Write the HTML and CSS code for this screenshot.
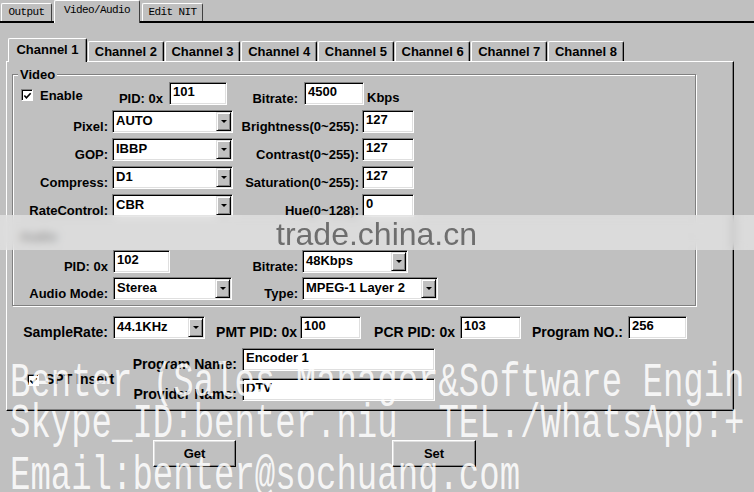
FILE: index.html
```html
<!DOCTYPE html>
<html lang="en">
<head>
    <meta charset="UTF-8">
    <title>Encoder Settings</title>
    <link rel="stylesheet" href="styles.css">
</head>
<body>
    <!-- page tabs -->
    <div class="top-tabs">
        <div class="top-tab tab-output">Output</div>
        <div class="top-tab tab-av active">Video/Audio</div>
        <div class="top-tab tab-nit">Edit NIT</div>
    </div>

    <!-- channel tabs -->
    <div class="chan-tabs">
        <div class="chan-tab active">Channel 1</div>
        <div class="chan-tab">Channel 2</div>
        <div class="chan-tab">Channel 3</div>
        <div class="chan-tab">Channel 4</div>
        <div class="chan-tab">Channel 5</div>
        <div class="chan-tab">Channel 6</div>
        <div class="chan-tab">Channel 7</div>
        <div class="chan-tab">Channel 8</div>
    </div>

    <div class="panel">
        <div class="group video">
            <div class="group-title">Video</div>

            <div class="vrow">
                <div class="enable">
                    <span class="chk"><svg viewBox="0 0 10 10" width="10" height="10"><polyline points="1.5,4.5 3.8,7 8.5,2" fill="none" stroke="#000" stroke-width="1.8"/></svg></span>
                    <span class="chk-text">Enable</span>
                </div>
                <label class="lbl w50">PID: 0x</label>
                <input class="edit w58" type="text" value="101">
                <label class="lbl w71 gap6">Bitrate:</label>
                <input class="edit w60" type="text" value="4500">
                <span class="unit">Kbps</span>
            </div>

            <div class="vrow">
                <label class="lbl w95">Pixel:</label>
                <div class="combo w121"><span class="combo-text">AUTO</span><span class="combo-btn"><i class="arrow"></i></span></div>
                <label class="lbl w126 gap3">Brightness(0~255):</label>
                <input class="edit w52" type="text" value="127">
            </div>

            <div class="vrow">
                <label class="lbl w95">GOP:</label>
                <div class="combo w121"><span class="combo-text">IBBP</span><span class="combo-btn"><i class="arrow"></i></span></div>
                <label class="lbl w126 gap3">Contrast(0~255):</label>
                <input class="edit w52" type="text" value="127">
            </div>

            <div class="vrow">
                <label class="lbl w95">Compress:</label>
                <div class="combo w121"><span class="combo-text">D1</span><span class="combo-btn"><i class="arrow"></i></span></div>
                <label class="lbl w126 gap3">Saturation(0~255):</label>
                <input class="edit w52" type="text" value="127">
            </div>

            <div class="vrow">
                <label class="lbl w95">RateControl:</label>
                <div class="combo w121"><span class="combo-text">CBR</span><span class="combo-btn"><i class="arrow"></i></span></div>
                <label class="lbl w126 gap3">Hue(0~128):</label>
                <input class="edit w52" type="text" value="0">
            </div>
        </div>

        <div class="group audio">
            <div class="group-title">Audio</div>

            <div class="arow">
                <label class="lbl w95 gap5">PID: 0x</label>
                <input class="edit w57" type="text" value="102">
                <label class="lbl w128 gap4">Bitrate:</label>
                <div class="combo w106"><span class="combo-text">48Kbps</span><span class="combo-btn"><i class="arrow"></i></span></div>
            </div>

            <div class="arow">
                <label class="lbl w95 gap5">Audio Mode:</label>
                <div class="combo w119"><span class="combo-text">Sterea</span><span class="combo-btn"><i class="arrow"></i></span></div>
                <label class="lbl w66 gap4">Type:</label>
                <div class="combo w136"><span class="combo-text">MPEG-1 Layer 2</span><span class="combo-btn"><i class="arrow"></i></span></div>
            </div>
        </div>

        <div class="prow">
            <label class="lbl w101 gap5">SampleRate:</label>
            <div class="combo w92"><span class="combo-text">44.1KHz</span><span class="combo-btn"><i class="arrow"></i></span></div>
            <label class="lbl w92 gap3">PMT PID: 0x</label>
            <input class="edit w61" type="text" value="100">
            <label class="lbl w94 gap5">PCR PID: 0x</label>
            <input class="edit w61" type="text" value="103">
            <label class="lbl w102 gap5">Program NO.:</label>
            <input class="edit w59" type="text" value="256">
        </div>

        <div class="names">
            <div class="spt">
                <span class="chk"><svg viewBox="0 0 10 10" width="10" height="10"><polyline points="1.5,4.5 3.8,7 8.5,2" fill="none" stroke="#000" stroke-width="1.8"/></svg></span>
                <span class="chk-text">SPT Insert</span>
            </div>
            <label class="lbl name-lbl">Program Name:</label>
            <input class="edit" type="text" value="Encoder 1">
            <label class="lbl name-lbl">Provider Name:</label>
            <input class="edit" type="text" value="DTV">
        </div>
    </div>

    <div class="buttons">
        <button class="btn btn-get">Get</button>
        <button class="btn btn-set">Set</button>
    </div>

    <!-- watermarks laid over the dialog -->
    <div class="band"><span class="band-text">trade.china.cn</span></div>
    <div class="wm wm1">Benter (Sales Manager&amp;Software Engin</div>
    <div class="wm wm2">Skype_ID:benter.niu  TEL./WhatsApp:+</div>
    <div class="wm wm3">Email:benter@sochuang.com</div>
</body>
</html>
```

FILE: styles.css
```css
* {
    box-sizing: border-box;
}

html, body {
    overflow: hidden;
}

body {
    margin: 0;
    width: 754px;
    height: 492px;
    position: relative;
    background-color: #c0c0c0;
    font-family: "Liberation Sans", Arial, sans-serif;
    font-size: 13px;
    font-weight: bold;
    color: #000;
}

/* Page tabs */
.top-tabs {
    display: flex;
    align-items: flex-end;
    height: 23px;
    padding-left: 1px;
    border-bottom: 2px solid #000;
}
.top-tab {
    height: 18px;
    margin-right: 2px;
    border: 1px solid #fff;
    border-right-color: #404040;
    border-bottom: none;
    border-radius: 2px 2px 0 0;
    font-family: "Liberation Mono", monospace;
    font-size: 11px;
    font-weight: normal;
    letter-spacing: -0.6px;
    line-height: 16px;
    text-align: center;
}
.top-tab.active {
    height: 23px;
    margin-bottom: -2px;
    background-color: #c0c0c0;
    line-height: 18px;
}
.tab-output { width: 51px; }
.tab-av { width: 86px; }
.tab-nit { width: 61px; }

/* Channel tabs */
.chan-tabs {
    display: flex;
    align-items: flex-end;
    height: 23px;
    margin: 15px 0 0 8px;
    position: relative;
    z-index: 1;
}
.chan-tab {
    width: 75.7px;
    height: 20px;
    margin-right: 1px;
    border-top: 1px solid #fff;
    border-left: 1px solid #fff;
    border-right: 1px solid #000;
    border-radius: 2px 2px 0 0;
    box-shadow: inset -1px 0 0 #808080;
    line-height: 19px;
    text-align: center;
    white-space: nowrap;
}
.chan-tab.active {
    width: 79px;
    height: 24px;
    margin-bottom: -1px;
    background-color: #c0c0c0;
    line-height: 21px;
}

.panel {
    width: 728px;
    height: 350px;
    margin-left: 6px;
    border-top: 1px solid #fff;
    border-left: 1px solid #fff;
    border-right: 1px solid #000;
    border-bottom: 1px solid #000;
    box-shadow: inset -1px -1px 0 #808080;
    padding-top: 12px;
}

/* Group boxes */
.group {
    position: relative;
    width: 684px;
    margin-left: 5px;
    border: 1px solid #808080;
    box-shadow: 1px 1px 0 #fff, inset 1px 1px 0 #fff;
}
.group-title {
    position: absolute;
    top: -8px;
    left: 5px;
    padding: 0 2px;
    background-color: #c0c0c0;
    line-height: 15px;
}
.video {
    padding: 7px 0 8px;
}
.audio {
    margin-top: 10px;
    padding: 13px 0 5px;
}

.vrow, .arow, .prow {
    display: flex;
    height: 23px;
}
.vrow + .vrow {
    margin-top: 5px;
}
.arow + .arow {
    margin-top: 4px;
}
.prow {
    margin-top: 10px;
    font-size: 14px;
}

/* Labels sit on the bottom edge of their row */
.lbl {
    display: flex;
    align-items: flex-end;
    justify-content: flex-end;
    line-height: 13px;
    white-space: nowrap;
}
.w50 { width: 50px; margin-right: 6px; }
.w71 { width: 71px; }
.w95 { width: 95px; margin-right: 4px; }
.w126 { width: 126px; }
.w128 { width: 128px; }
.w66 { width: 66px; }
.w101 { width: 101px; }
.w92 { width: 92px; }
.w94 { width: 94px; }
.w102 { width: 102px; }
.gap3 { margin-right: 3px; }
.gap4 { margin-right: 4px; }
.gap5 { margin-right: 5px; }
.gap6 { margin-right: 6px; }

.enable, .spt {
    display: flex;
    align-items: flex-end;
}
.enable {
    width: 100px;
    padding: 0 0 3px 8px;
}
.chk {
    display: flex;
    align-items: center;
    justify-content: center;
    width: 12px;
    height: 12px;
    margin-bottom: 1px;
    background-color: #fff;
    border-top: 1px solid #808080;
    border-left: 1px solid #808080;
    border-right: 1px solid #fff;
    border-bottom: 1px solid #fff;
    box-shadow: inset 1px 1px 0 #000;
}
.chk svg {
    margin: 1px 0 0 1px;
}
.chk-text {
    margin-left: 7px;
    line-height: 13px;
}
.unit {
    display: flex;
    align-items: flex-end;
    margin-left: 3px;
    line-height: 13px;
    padding-bottom: 1px;
}

/* Edit boxes and drop-down lists */
.edit, .combo {
    height: 23px;
    background-color: #fff;
    border-top: 1px solid #808080;
    border-left: 1px solid #808080;
    border-right: 1px solid #fff;
    border-bottom: 1px solid #fff;
    box-shadow: inset 1px 1px 0 #000, inset -1px -1px 0 #dfdfdf;
}
.edit {
    margin: 0;
    padding: 0 3px 4px;
    outline: none;
    font-family: "Liberation Sans", Arial, sans-serif;
    font-size: 13px;
    font-weight: bold;
    line-height: 15px;
    color: #000;
}
.combo {
    display: flex;
    padding: 1px 1px 1px 0;
}
.combo-text {
    flex: 1;
    padding: 1px 0 0 3px;
    line-height: 15px;
    font-size: 13px;
    white-space: nowrap;
    overflow: hidden;
}
.combo-btn {
    display: flex;
    align-items: center;
    justify-content: center;
    width: 15px;
    background-color: #c0c0c0;
    border-top: 1px solid #dfdfdf;
    border-left: 1px solid #dfdfdf;
    border-right: 1px solid #000;
    border-bottom: 1px solid #000;
    box-shadow: inset 1px 1px 0 #fff, inset -1px -1px 0 #808080;
}
.arrow {
    width: 0;
    height: 0;
    border-left: 3px solid transparent;
    border-right: 3px solid transparent;
    border-top: 3px solid #000;
}
.w52 { width: 52px; }
.w57 { width: 57px; }
.w58 { width: 58px; }
.w59 { width: 59px; }
.w60 { width: 60px; }
.w61 { width: 61px; }
.combo.w92 { width: 92px; margin-right: 0; }
.w106 { width: 106px; }
.w119 { width: 119px; }
.w121 { width: 121px; }
.w136 { width: 136px; }

/* Program / provider names */
.names {
    display: grid;
    grid-template-columns: 128px 107px 193px;
    grid-template-rows: 23px 23px;
    row-gap: 7px;
    margin-top: 9px;
    font-size: 14px;
}
.name-lbl {
    padding-right: 5px;
}
.spt {
    grid-row: 1 / 3;
    align-self: end;
    margin: 0 0 15px 20px;
}
.spt .chk {
    margin-bottom: 0;
}
.spt .chk-text {
    margin-left: 6px;
}

/* Get / Set */
.buttons {
    display: flex;
    margin-top: 29px;
}
.btn {
    height: 27px;
    padding: 0;
    background-color: #c0c0c0;
    border-top: 1px solid #fff;
    border-left: 1px solid #fff;
    border-right: 1px solid #000;
    border-bottom: 1px solid #000;
    box-shadow: inset -1px -1px 0 #808080, inset 1px 1px 0 #dfdfdf;
    font-family: "Liberation Sans", Arial, sans-serif;
    font-size: 13px;
    font-weight: bold;
    color: #000;
}
.btn-get {
    width: 83px;
    margin-left: 153px;
}
.btn-set {
    width: 84px;
    margin-left: 156px;
}

/* Watermark band and lettering */
.band {
    position: absolute;
    left: 0;
    top: 215px;
    width: 754px;
    height: 35px;
    overflow: hidden;
    background-color: rgba(236, 236, 236, 0.6);
    backdrop-filter: blur(4px);
}
.band-text {
    display: block;
    padding: 2px 0 0 276px;
    font-size: 32px;
    font-weight: normal;
    line-height: 35px;
    color: rgba(90, 90, 90, 0.85);
}
.wm {
    position: absolute;
    left: 10px;
    font-family: "Liberation Mono", monospace;
    font-size: 34px;
    font-weight: normal;
    line-height: 34px;
    white-space: pre;
    color: rgba(255, 255, 255, 0.85);
    transform: scaleY(1.4);
    transform-origin: 0 0;
    pointer-events: none;
}
.wm1 { top: 360px; }
.wm2 { top: 401px; }
.wm3 { top: 453px; }
```
